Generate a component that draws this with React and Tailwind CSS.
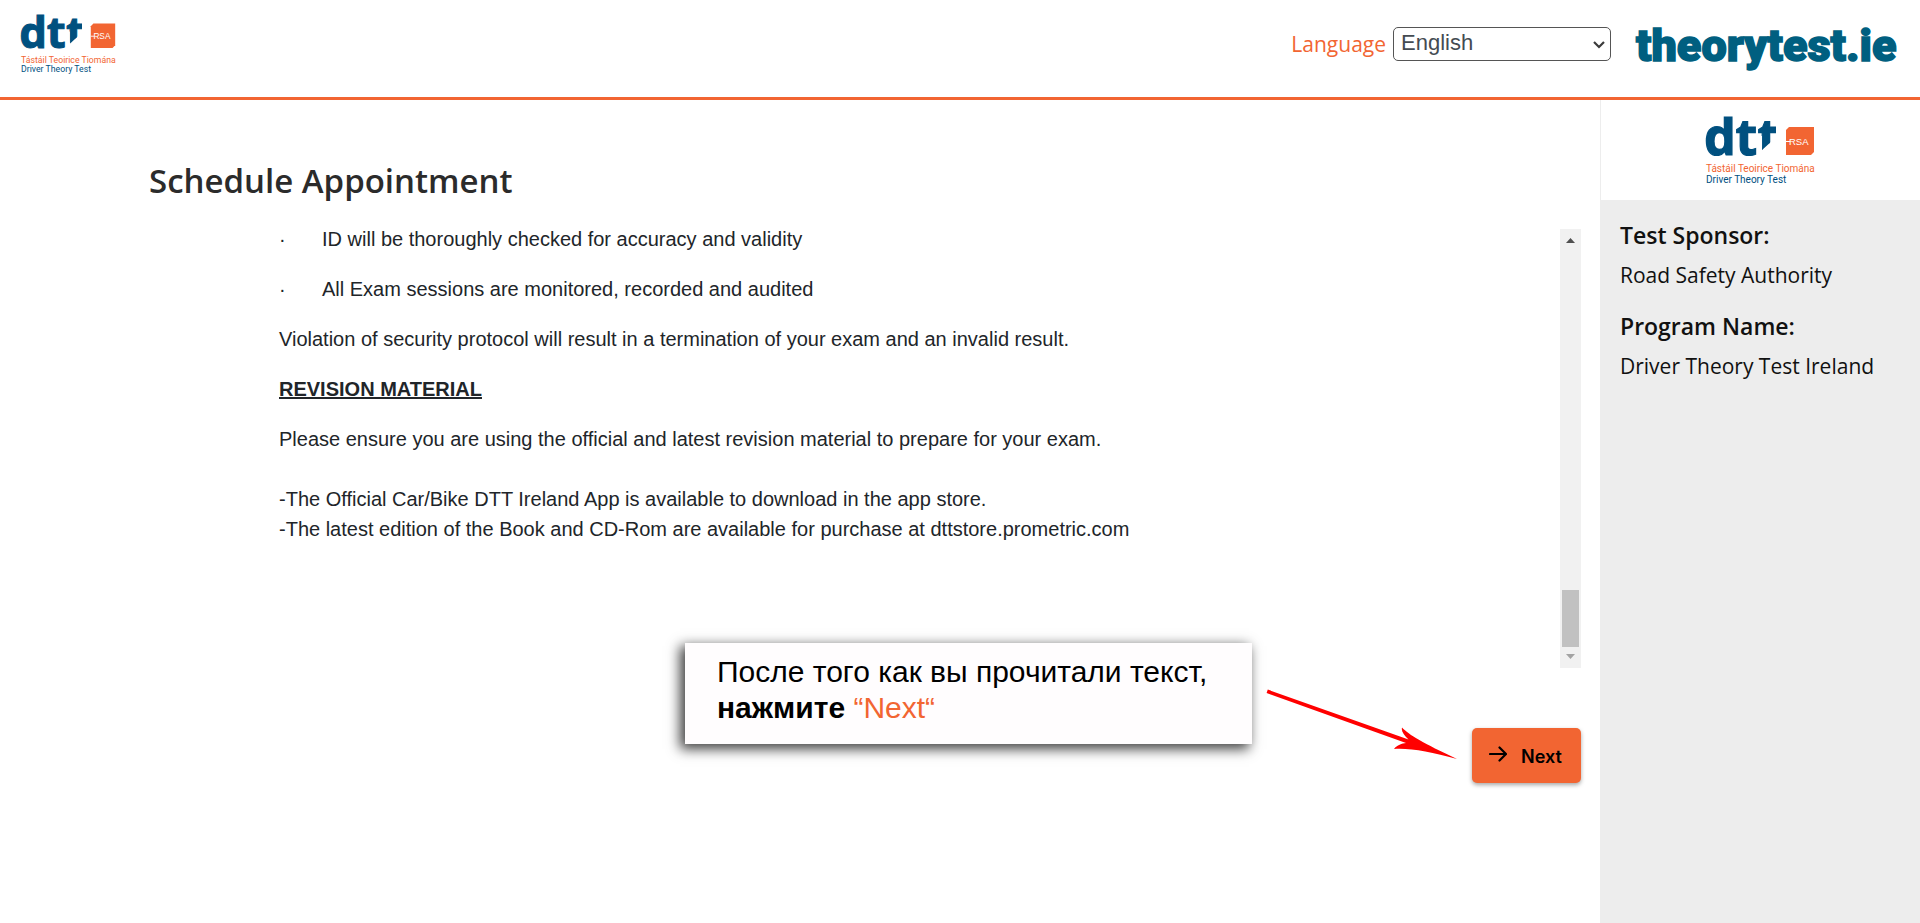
import React from "react";

function DttLogo({ className, id }) {
  return (
    <svg viewBox="0 0 110 70" className={className} role="img" aria-label="Driver Theory Test">
      <defs>
        <clipPath id={id}>
          <path d="M50 0H70V20H66V25L56 34V20H50Z" />
        </clipPath>
      </defs>
      <g fill="#00507f" stroke="#00507f" strokeWidth="1.200" fontFamily="'Noto Sans', sans-serif" fontWeight="700" fontSize="50">
        <text x="-2" y="38.500">d</text>
        <text x="29.500" y="38.500">t</text>
        <g clipPath={`url(#${id})`}>
          <text x="51.500" y="38.500">t</text>
        </g>
      </g>
      <path d="M83 11H108V36L105 39H80V14Z" fill="#f26532" />
      <path d="M80 25.500H84" stroke="#fff" strokeWidth="1" />
      <text x="83" y="29" fill="#fff" fontFamily="'Liberation Sans', sans-serif" fontSize="9.500">RSA</text>
      <text x="0" y="56" fill="#f26532" fontFamily="Roboto, sans-serif" fontSize="10">Tástáil Teoirice Tiomána</text>
      <text x="0" y="67" fill="#00507f" fontFamily="Roboto, sans-serif" fontSize="10">Driver Theory Test</text>
    </svg>
  );
}

function Header() {
  return (
    <header className="flex h-[100px] items-start justify-between border-b-[3px] border-[#f26532] bg-white pl-[21px] pr-6">
      <DttLogo id="header-mark" className="mt-[14px] h-[61px] w-24 overflow-visible" />
      <div className="flex items-start">
        <div className="mt-[27px] flex items-center gap-[7px]">
          <label htmlFor="language" className="font-['Open_Sans',sans-serif] text-[21px] leading-[34px] text-[#f26532]">
            Language
          </label>
          <div className="relative">
            <select
              id="language"
              className="h-[34px] w-[218px] appearance-none rounded-[5px] border border-[#555] bg-white pb-[2px] pl-[7px] font-['Liberation_Sans',sans-serif] text-[22px] leading-7 text-[#444b52]"
            >
              <option>English</option>
            </select>
            <svg viewBox="0 0 12 8" className="pointer-events-none absolute right-[6px] top-[14px] h-2 w-3" fill="none" stroke="#3b3b3b" strokeWidth="2.200">
              <path d="M1 1L6 6L11 1" />
            </svg>
          </div>
        </div>
        <svg viewBox="0 0 262 56" className="ml-[23px] mt-4 h-14 w-[262px] overflow-visible" role="img" aria-label="theorytest.ie">
          <text
            x="2"
            y="45"
            fill="#005f80"
            stroke="#005f80"
            strokeWidth="1.500"
            fontFamily="Roboto, sans-serif"
            fontWeight="900"
            fontSize="45"
          >
            theorytest.ie
          </text>
        </svg>
      </div>
    </header>
  );
}

function ScrollTrack() {
  return (
    <div aria-hidden="true" className="flex w-[21px] shrink-0 flex-col items-center bg-[#f1f1f1]">
      <svg viewBox="0 0 9 5" className="mt-[9px] h-[5px] w-[9px]" fill="#505050">
        <path d="M0 5L4.500 0L9 5Z" />
      </svg>
      <div className="mt-auto h-[57px] w-[17px] bg-[#c1c1c1]" />
      <svg viewBox="0 0 9 5" className="mb-[9px] mt-[7px] h-[5px] w-[9px]" fill="#a3a3a3">
        <path d="M0 0L4.500 5L9 0Z" />
      </svg>
    </div>
  );
}

function Callout() {
  return (
    <div className="absolute bottom-[39px] right-[329px] w-[567px] bg-[#fffdfe] pb-[18px] pl-8 pt-[11px] text-[30px] leading-9 text-black shadow-[-4px_4px_12px_1px_rgba(0,0,0,0.75)]">
      <p className="whitespace-nowrap">После того как вы прочитали текст,</p>
      <p>
        <b>нажмите</b> <span className="text-[#f26532]">“Next“</span>
      </p>
    </div>
  );
}

function Pointer() {
  return (
    <svg viewBox="0 0 194 74" className="absolute bottom-[22px] right-[122px] h-[74px] w-[194px]" fill="#f00">
      <path d="M2.800 2.600L143.500 52.500C139 48 136 44 137 40.500C144 48 158 56 192 72C166 65 146 61 129 62C132 58 137 56.500 141 56L1.600 6Z" />
    </svg>
  );
}

const notices = [
  "ID will be thoroughly checked for accuracy and validity",
  "All Exam sessions are monitored, recorded and audited",
];

function SponsorPanel() {
  return (
    <aside className="w-80 shrink-0 border-l border-[#ededed] bg-[#ededed] font-['Open_Sans',sans-serif] text-[#111]">
      <div className="flex h-[100px] justify-center bg-white">
        <DttLogo id="panel-mark" className="mt-4 h-[70px] w-[110px] overflow-visible" />
      </div>
      <dl className="px-[19px] pt-[18px]">
        <dt className="text-[23px] font-semibold leading-[34px]">Test Sponsor:</dt>
        <dd className="mt-[7px] text-[21px] leading-8">Road Safety Authority</dd>
        <dt className="mt-[18px] text-[23px] font-semibold leading-[34px]">Program Name:</dt>
        <dd className="mt-[7px] text-[21px] leading-8">Driver Theory Test Ireland</dd>
      </dl>
    </aside>
  );
}

export default function App() {
  return (
    <div className="flex min-h-screen flex-col bg-white font-['Liberation_Sans',sans-serif] text-[#212529]">
      <Header />
      <div className="flex grow">
        <main className="min-w-0 grow pl-[149px] pr-[19px] pt-[59px]">
          <h1 className="font-['Open_Sans',sans-serif] text-[33px] font-semibold leading-[44px] text-[#2b2b2b]">Schedule Appointment</h1>
          <div className="mt-[26px] flex h-[439px]">
            <section className="min-w-0 grow pl-[130px] text-[20px] leading-[30px]">
              <ul className="-mt-[5px] flex flex-col gap-5">
                {notices.map((notice) => (
                  <li key={notice} className="flex">
                    <span className="w-[43px]">·</span>
                    {notice}
                  </li>
                ))}
              </ul>
              <p className="mt-5">Violation of security protocol will result in a termination of your exam and an invalid result.</p>
              <h2 className="mt-5 font-bold underline">REVISION MATERIAL</h2>
              <p className="mt-5">Please ensure you are using the official and latest revision material to prepare for your exam.</p>
              <p className="mt-[30px]">-The Official Car/Bike DTT Ireland App is available to download in the app store.</p>
              <p>-The latest edition of the Book and CD-Rom are available for purchase at dttstore.prometric.com</p>
            </section>
            <ScrollTrack />
          </div>
          <div className="relative mt-[60px] flex justify-end">
            <Callout />
            <Pointer />
            <button
              type="button"
              className="flex h-[55px] w-[109px] items-center rounded-[5px] bg-[#f26532] pl-[17px] pt-[2px] font-['Inter',sans-serif] text-[18px] font-semibold text-black shadow-[0_2px_4px_rgba(0,0,0,0.35)]"
            >
              <svg viewBox="0 0 18 16" className="mb-[6px] mr-[14px] h-4 w-[18px]" fill="none" stroke="currentColor" strokeWidth="2.200" strokeLinecap="round" strokeLinejoin="round">
                <path d="M1 8H17M10.500 1.500L17 8L10.500 14.500" />
              </svg>
              Next
            </button>
          </div>
        </main>
        <SponsorPanel />
      </div>
    </div>
  );
}
